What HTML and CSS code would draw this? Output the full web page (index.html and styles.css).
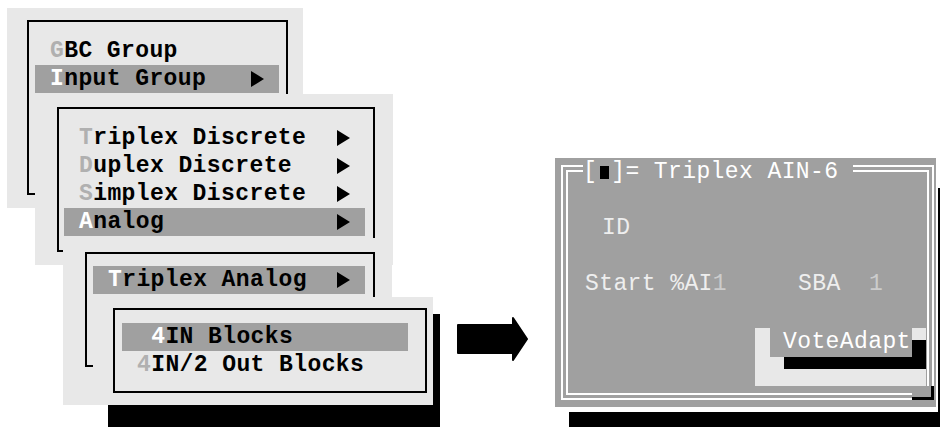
FILE: index.html
```html
<!DOCTYPE html>
<html lang="en">
<head>
    <meta charset="UTF-8">
    <meta name="viewport" content="width=device-width, initial-scale=1.0">
    <title>Triplex AIN-6</title>
    <link rel="stylesheet" href="styles.css">
</head>
<body>
    <div class="desk">
        <div class="menu m1">
            <div class="frame">
                <div class="item"><span><b class="key">G</b>BC Group</span></div>
                <div class="item sel"><span><b class="key">I</b>nput Group</span><i class="sub"></i></div>
            </div>
        </div>
        <div class="menu m2">
            <div class="frame">
                <div class="item"><span><b class="key">T</b>riplex Discrete</span><i class="sub"></i></div>
                <div class="item"><span><b class="key">D</b>uplex Discrete</span><i class="sub"></i></div>
                <div class="item"><span><b class="key">S</b>implex Discrete</span><i class="sub"></i></div>
                <div class="item sel"><span><b class="key">A</b>nalog</span><i class="sub"></i></div>
            </div>
        </div>
        <div class="menu m3">
            <div class="frame">
                <div class="item sel"><span><b class="key">T</b>riplex Analog</span><i class="sub"></i></div>
            </div>
        </div>
        <div class="shade4"></div>
        <div class="menu m4">
            <div class="frame">
                <div class="item sel"><span> <b class="key">4</b>IN Blocks</span></div>
                <div class="item"><span><b class="key">4</b>IN/2 Out Blocks</span></div>
            </div>
        </div>

        <svg class="arrow" width="71" height="44" viewBox="0 0 71 44">
            <path d="M1 8 H56 V1 L70 22 L56 43 V36 H1 Z" fill="#000" stroke="#000" stroke-width="2" stroke-linejoin="round"/>
        </svg>

        <div class="dshade"></div>
        <div class="dialog">
            <div class="outer">
                <div class="inner">
                    <div class="dline id">ID</div>
                    <div class="dline start">Start %AI<span class="dim">1</span>     SBA  <span class="dim">1</span></div>
                    <div class="btn">
                        <div class="face">VoteAdapt</div>
                    </div>
                </div>
            </div>
            <div class="title">[<span class="close"></span>]= Triplex AIN-6 </div>
            <div class="grip"></div>
        </div>
    </div>
</body>
</html>
```

FILE: styles.css
```css
body{
    margin: 0;
    background: #ffffff;
}
.desk{
    position: relative;
    width: 940px;
    height: 427px;
    overflow: hidden;
    font-family: "Liberation Mono", "DejaVu Sans Mono", monospace;
    font-size: 23px;
    letter-spacing: 0.4px;
    line-height: 28px;
}

/* cascading menus */
.menu{
    position: absolute;
    box-sizing: border-box;
    background: #e8e8e8;
}
.frame{
    box-sizing: border-box;
    border: 2px solid #000;
}
.m1{
    left: 7px;
    top: 8px;
    width: 296px;
    height: 200px;
    padding: 12px 15px 0 20px;
}
.m1 .frame{
    height: 175px;
    padding: 15px 7px 0 6px;
}
.m2{
    left: 35px;
    top: 94px;
    width: 358px;
    height: 171px;
    padding: 13px 18px 0 22px;
}
.m2 .frame{
    height: 145px;
    padding: 15px 8px 0 5px;
}
.m3{
    left: 63px;
    top: 238px;
    width: 329px;
    height: 167px;
    padding: 14px 17px 0 22px;
}
.m3 .frame{
    height: 115px;
    padding: 12px 8px 0 6px;
}
.shade4{
    position: absolute;
    left: 108px;
    top: 314px;
    width: 332px;
    height: 113px;
    background: #000;
}
.m4{
    left: 93px;
    top: 297px;
    width: 340px;
    height: 108px;
    padding: 11px 6px 0 20px;
}
.m4 .frame{
    height: 85px;
    padding: 13px 17px 0 7px;
}
.item{
    display: flex;
    justify-content: space-between;
    align-items: center;
    height: 28px;
    padding: 0 15px;
    font-weight: bold;
    color: #000;
    white-space: pre;
}
.item.sel{
    background: #a0a0a0;
}
.key{
    color: #b0b0b0;
}
.sel .key{
    color: #ffffff;
}
.sub{
    width: 0;
    height: 0;
    border-left: 13px solid #000;
    border-top: 8px solid transparent;
    border-bottom: 8px solid transparent;
}

.arrow{
    position: absolute;
    left: 457px;
    top: 317px;
}

/* dialog window */
.dshade{
    position: absolute;
    left: 569px;
    top: 188px;
    width: 371px;
    height: 239px;
    background: #000;
}
.dialog{
    position: absolute;
    left: 555px;
    top: 158px;
    width: 381px;
    height: 249px;
    box-sizing: border-box;
    padding: 7px 2px 7px 6px;
    background: #a0a0a0;
    box-shadow: 2px 5px 0 #ffffff;
    color: #eeeeee;
}
.outer{
    box-sizing: border-box;
    height: 100%;
    border: 2px solid #ffffff;
    padding: 3px;
}
.inner{
    box-sizing: border-box;
    height: 100%;
    border: 2px solid #ffffff;
    padding: 42px 0 0 17px;
}
.dline{
    height: 28px;
    white-space: pre;
}
.id{
    padding-left: 17px;
}
.start{
    margin-top: 28px;
}
.dim{
    color: #cccccc;
}
.btn{
    box-sizing: border-box;
    width: 171px;
    height: 58px;
    margin: 30px 0 0 170px;
    padding-left: 15px;
    background: #e8e8e8;
}
.face{
    box-sizing: border-box;
    width: 142px;
    height: 29px;
    padding-left: 13px;
    line-height: 29px;
    background: #a0a0a0;
    color: #ffffff;
    box-shadow: 14px 12px 0 #000;
}
.title{
    position: absolute;
    left: 28px;
    top: 0;
    background: #a0a0a0;
    color: #ffffff;
    white-space: pre;
}
.close{
    display: inline-block;
    width: 9px;
    height: 13px;
    margin: 0 2px 0 3px;
    background: #000;
    vertical-align: -1px;
}
.grip{
    position: absolute;
    left: 357px;
    top: 228px;
    width: 22px;
    height: 14px;
    box-sizing: border-box;
    background: #a0a0a0;
    border-right: 3px solid #000;
    border-bottom: 3px solid #000;
}
```
